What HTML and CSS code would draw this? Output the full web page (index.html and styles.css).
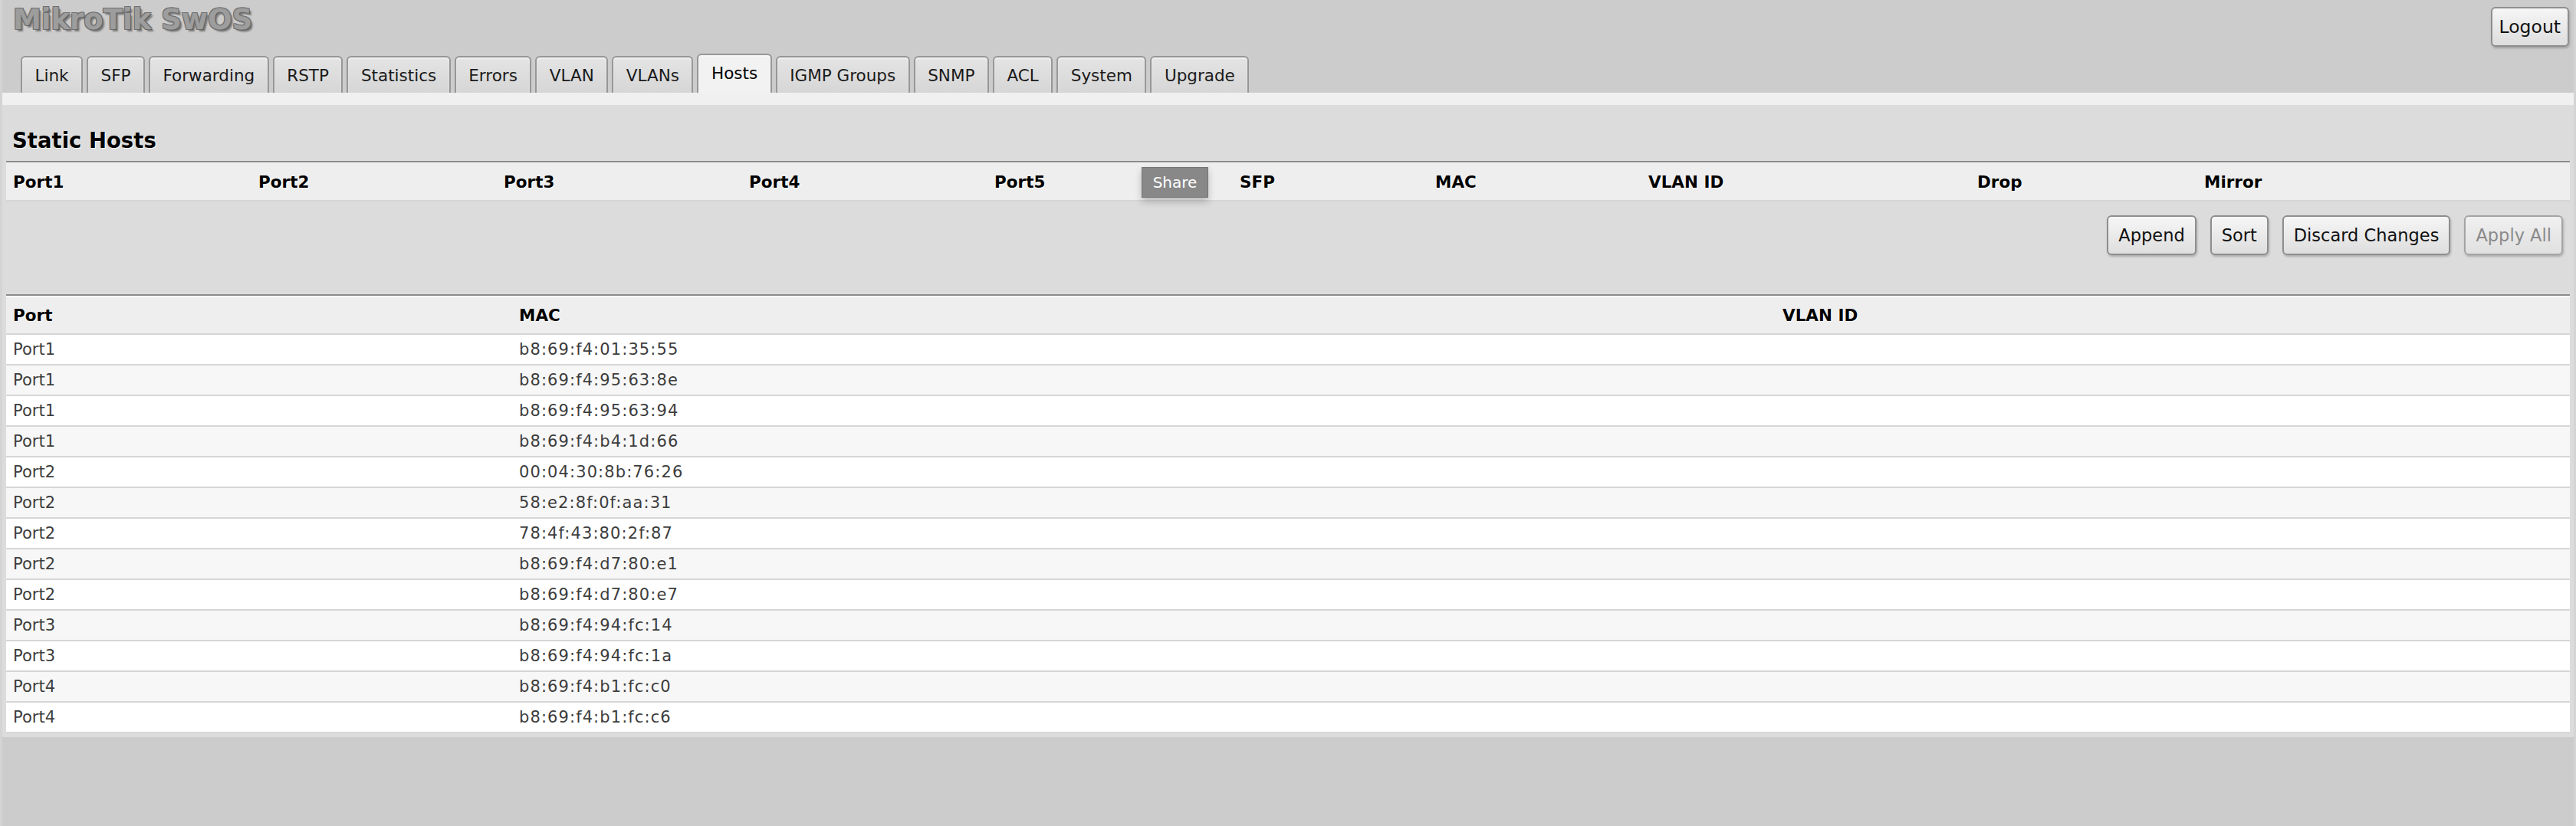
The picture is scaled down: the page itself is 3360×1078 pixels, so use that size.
FILE: index.html
```html
<!DOCTYPE html>
<html lang="en">

<head>
    <meta charset="UTF-8">
    <title>MikroTik SwOS</title>
    <link rel="stylesheet" href="styles.css">
</head>

<body>
    <div class="top">
        <h1 class="logo">MikroTik SwOS</h1>
        <button class="btn logout">Logout</button>
    </div>
    <div class="tabs">
        <span class="tab">Link</span>
        <span class="tab">SFP</span>
        <span class="tab">Forwarding</span>
        <span class="tab">RSTP</span>
        <span class="tab">Statistics</span>
        <span class="tab">Errors</span>
        <span class="tab">VLAN</span>
        <span class="tab">VLANs</span>
        <span class="tab active">Hosts</span>
        <span class="tab">IGMP Groups</span>
        <span class="tab">SNMP</span>
        <span class="tab">ACL</span>
        <span class="tab">System</span>
        <span class="tab">Upgrade</span>
    </div>

    <div class="panel">
        <h2 class="section">Static Hosts</h2>
        <div class="head static_cols">
            <span>Port1</span>
            <span>Port2</span>
            <span>Port3</span>
            <span>Port4</span>
            <span>Port5</span>
            <span>SFP</span>
            <span>MAC</span>
            <span>VLAN ID</span>
            <span>Drop</span>
            <span>Mirror</span>
            <span class="share">Share</span>
        </div>
        <div class="toolbar">
            <button class="btn">Append</button>
            <button class="btn">Sort</button>
            <button class="btn">Discard Changes</button>
            <button class="btn" disabled>Apply All</button>
        </div>

        <div class="hosts">
            <div class="head host_cols">
                <span>Port</span>
                <span>MAC</span>
                <span>VLAN ID</span>
            </div>
            <div class="row host_cols"><span>Port1</span><span class="mac">b8:69:f4:01:35:55</span><span></span></div>
            <div class="row host_cols"><span>Port1</span><span class="mac">b8:69:f4:95:63:8e</span><span></span></div>
            <div class="row host_cols"><span>Port1</span><span class="mac">b8:69:f4:95:63:94</span><span></span></div>
            <div class="row host_cols"><span>Port1</span><span class="mac">b8:69:f4:b4:1d:66</span><span></span></div>
            <div class="row host_cols"><span>Port2</span><span class="mac">00:04:30:8b:76:26</span><span></span></div>
            <div class="row host_cols"><span>Port2</span><span class="mac">58:e2:8f:0f:aa:31</span><span></span></div>
            <div class="row host_cols"><span>Port2</span><span class="mac">78:4f:43:80:2f:87</span><span></span></div>
            <div class="row host_cols"><span>Port2</span><span class="mac">b8:69:f4:d7:80:e1</span><span></span></div>
            <div class="row host_cols"><span>Port2</span><span class="mac">b8:69:f4:d7:80:e7</span><span></span></div>
            <div class="row host_cols"><span>Port3</span><span class="mac">b8:69:f4:94:fc:14</span><span></span></div>
            <div class="row host_cols"><span>Port3</span><span class="mac">b8:69:f4:94:fc:1a</span><span></span></div>
            <div class="row host_cols"><span>Port4</span><span class="mac">b8:69:f4:b1:fc:c0</span><span></span></div>
            <div class="row host_cols"><span>Port4</span><span class="mac">b8:69:f4:b1:fc:c6</span><span></span></div>
        </div>
    </div>
</body>

</html>
```

FILE: styles.css
```css
* {
    box-sizing: border-box;
}

body {
    margin: 0;
    min-height: 100vh;
    background: #cccccc;
    border-left: 3px solid #d4d4d4;
    border-right: 3px solid #d4d4d4;
    font-family: "DejaVu Sans", Verdana, sans-serif;
    color: #111;
}

.top {
    display: flex;
    justify-content: space-between;
    align-items: flex-start;
    height: 70px;
    padding: 0 6px 0 14px;
}

.logo {
    margin: 4px 0 0 0;
    font-size: 37px;
    line-height: 44px;
    font-weight: bold;
    color: #9d9d9d;
    text-shadow: -1px -1px 0 #6e6e6e, 1px -1px 0 #6e6e6e, -1px 1px 0 #6e6e6e, 1px 1px 0 #5a5a5a, 3px 3px 2px #7a7a7a;
}

/* buttons */
.btn {
    height: 52px;
    padding: 0 14px;
    font-family: "DejaVu Sans", Verdana, sans-serif;
    font-size: 22.5px;
    color: #111;
    background: linear-gradient(#f6f6f6, #dedede);
    border: 2px solid #8e8e8e;
    border-radius: 6px;
    box-shadow: 1px 2px 3px rgba(0, 0, 0, 0.22);
}

.btn:disabled {
    color: #8a8a8a;
    border-color: #a4a4a4;
    background: linear-gradient(#f0f0f0, #e0e0e0);
}

.logout {
    margin-top: 9px;
    font-size: 23.5px;
    padding: 0 9px;
}

/* tabs */
.tabs {
    display: flex;
    align-items: flex-end;
    gap: 5px;
    height: 51px;
    padding-left: 24px;
}

.tab {
    display: flex;
    align-items: center;
    height: 48px;
    padding: 0 16.5px 0 16.5px;
    font-size: 21.5px;
    color: #1a1a1a;
    background: linear-gradient(#e4e4e4, #d6d6d6);
    border: 2px solid #979797;
    border-bottom: none;
    border-radius: 6px 6px 0 0;
    box-shadow: inset 0 2px 2px rgba(255, 255, 255, 0.5);
}

.tab.active {
    height: 51px;
    padding-bottom: 3px;
    background: #f2f2f2;
    color: #000;
}

/* main panel */
.panel {
    background: #dcdcdc;
    border-top: 16px solid #f0f0f0;
    padding: 0 5px 5px 5px;
}

.section {
    margin: 0;
    padding: 31px 0 12px 8px;
    font-size: 27.5px;
    line-height: 30px;
    font-weight: bold;
    color: #000;
    text-shadow: 1px 1px 0 #fff;
    border-bottom: 2px solid #8a8a8a;
}

.head {
    position: relative;
    height: 51px;
    align-items: center;
    background: #eeeeee;
    border-top: 1px solid #fff;
    border-bottom: 2px solid #d6d6d6;
    font-size: 21.5px;
    font-weight: bold;
    color: #000;
    text-shadow: 1px 1px 0 #fff;
}

.static_cols {
    display: grid;
    grid-template-columns: 320px 320px 320px 320px 320px 255px 278px 429px 296px 1fr;
}

.head span,
.row span {
    padding-left: 9px;
}

.share {
    position: absolute;
    left: 1481px;
    top: 5px;
    width: 87px;
    height: 40px;
    display: flex;
    align-items: center;
    justify-content: center;
    padding: 0 !important;
    font-size: 20px;
    font-weight: normal;
    color: #fff;
    text-shadow: none;
    background: #888888;
    border: 1px solid #747474;
    box-shadow: 0 5px 9px rgba(0, 0, 0, 0.22);
}

.toolbar {
    display: flex;
    justify-content: flex-end;
    gap: 18px;
    padding: 18px 9px 51px 0;
}

.toolbar .btn {
    padding: 0 13px;
}

.hosts {
    border-top: 2px solid #8a8a8a;
}

.host_cols {
    display: grid;
    grid-template-columns: 660px 1648px 1fr;
}

.row {
    height: 40px;
    align-items: center;
    font-size: 21px;
    color: #3d3d3d;
    background: #fff;
    border-bottom: 2px solid #d6d6d6;
}

.row:nth-child(odd) {
    background: #f7f7f7;
}

.row .mac {
    letter-spacing: 1.1px;
}
```
